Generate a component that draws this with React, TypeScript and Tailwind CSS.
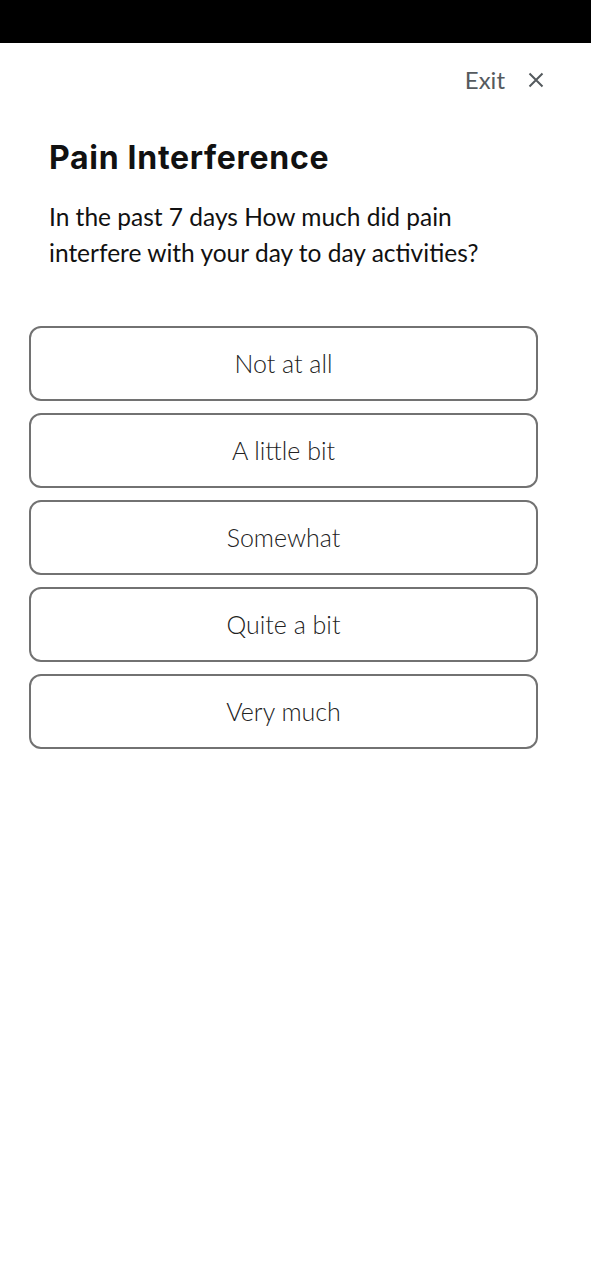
import React from "react";

const options = ["Not at all", "A little bit", "Somewhat", "Quite a bit", "Very much"];

export default function App() {
  return (
    <div className="min-h-[1280px] bg-white" style={{ fontFamily: "Lato, 'Noto Sans', sans-serif" }}>
      <div className="h-[43px] bg-black" />
      <div className="flex justify-end items-center pr-[47px] pt-[5px] h-[68px]">
        <span className="text-[24px] text-[#555a5e] leading-none">Exit</span>
        <svg className="ml-[23px]" width="16" height="16" viewBox="0 0 16 16" fill="none" stroke="#555a5e" strokeWidth="2">
          <path d="M1.5 1.5 L14.5 14.5 M14.5 1.5 L1.5 14.5" />
        </svg>
      </div>
      <div className="px-[49px] pt-[27px]">
        <h1
          className="text-[32px] font-bold text-[#111] leading-[40px] tracking-[0.7px]"
          style={{ fontFamily: "Inter, 'Noto Sans', sans-serif" }}
        >
          Pain Interference
        </h1>
        <p className="mt-[21px] w-[450px] text-[24.5px] leading-[36px] text-[#111]">
          In the past 7 days How much did pain interfere with your day to day activities?
        </p>
      </div>
      <div className="pl-[29px] pr-[53px] mt-[55px] flex flex-col gap-[12px]">
        {options.map((o) => (
          <div
            key={o}
            className="h-[75px] rounded-[12px] border-2 border-[#727272] flex items-center justify-center text-[25px] font-light text-[#222]"
          >
            {o}
          </div>
        ))}
      </div>
    </div>
  );
}
